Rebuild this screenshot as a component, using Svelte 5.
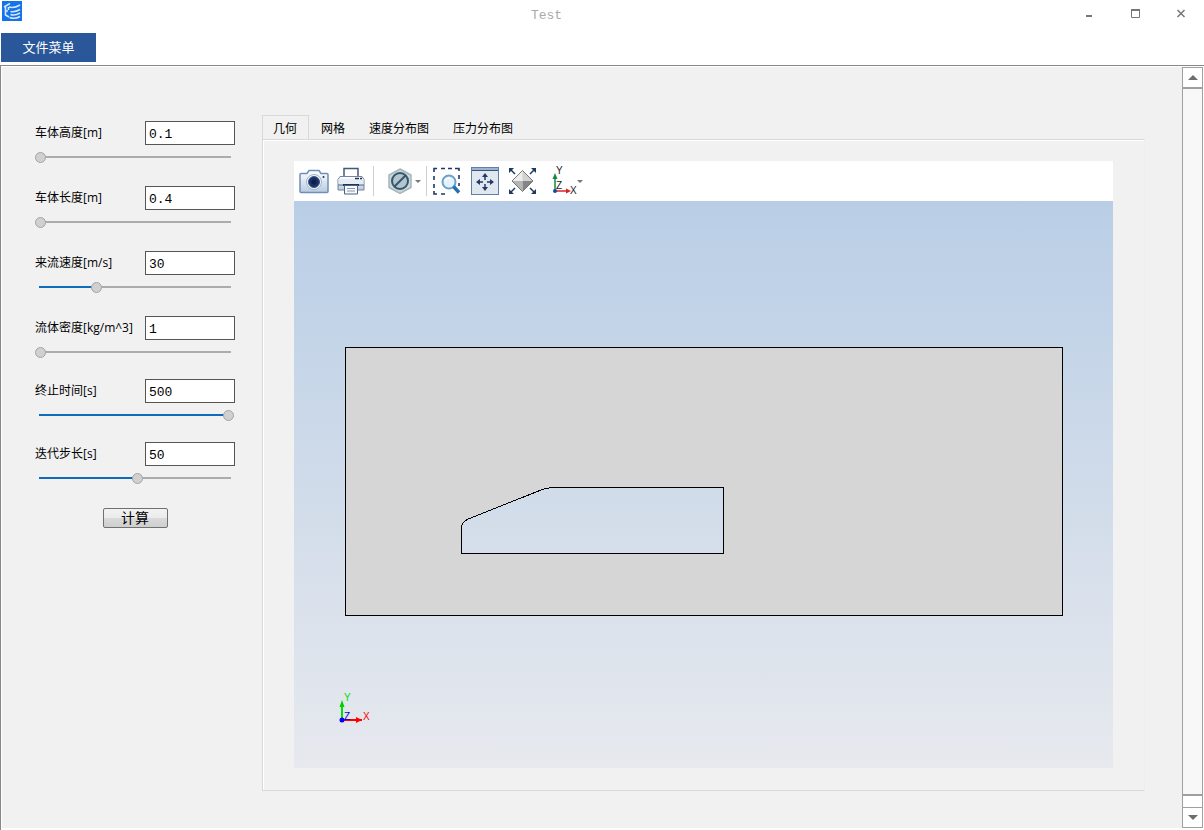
<script lang="ts">
  let params = $state([
    { id: 'height', label: '车体高度[m]', value: 0.1, min: 0.1, max: 1, step: 0.1 },
    { id: 'length', label: '车体长度[m]', value: 0.4, min: 0.4, max: 2, step: 0.1 },
    { id: 'speed', label: '来流速度[m/s]', value: 30, min: 0, max: 100, step: 1 },
    { id: 'density', label: '流体密度[kg/m^3]', value: 1, min: 1, max: 10, step: 1 },
    { id: 'end', label: '终止时间[s]', value: 500, min: 10, max: 500, step: 1 },
    { id: 'iter', label: '迭代步长[s]', value: 50, min: 1, max: 96, step: 1 }
  ]);

  const tabs = ['几何', '网格', '速度分布图', '压力分布图'];
  let active = $state(0);

  function fill(p) {
    const f = (p.value - p.min) / (p.max - p.min);
    return Math.min(1, Math.max(0, f));
  }
</script>

<div class="window">
  <header class="titlebar">
    <svg class="logo" width="20" height="20" viewBox="0 0 20 20" aria-hidden="true">
      <rect width="20" height="20" fill="#1473e8" />
      <path d="M2 6L8 2.500M3.500 6V14L7 16M3.500 10H6M6.500 6V9" fill="none" stroke="#d5e6fc" stroke-width="1.600" />
      <path d="M7 6Q12 7.500 18 4M8.500 10.500Q13 11.500 18 8.500M8.500 13.500Q13 15 18 12M7.500 16.500Q13 18.500 18 15.500" fill="none" stroke="#d5e6fc" stroke-width="1.600" />
    </svg>
    <span class="title">Test</span>
    <div class="win-buttons">
      <button type="button" aria-label="最小化">
        <svg width="12" height="12" viewBox="0 0 12 12"><path d="M3 8h6v2H3z" fill="#777" /></svg>
      </button>
      <button type="button" aria-label="最大化">
        <svg width="12" height="12" viewBox="0 0 12 12"><path d="M2.500 2.500h8v8h-8z" fill="none" stroke="#777" /><path d="M2 2h9v2H2z" fill="#777" /></svg>
      </button>
      <button type="button" aria-label="关闭">
        <svg width="12" height="12" viewBox="0 0 12 12"><path d="M2.500 3l7 7M9.500 3l-7 7" stroke="#777" stroke-width="1.500" /></svg>
      </button>
    </div>
  </header>

  <nav class="menubar">
    <button type="button" class="menu">文件菜单</button>
  </nav>

  <div class="client">
    <main class="content">
      <form class="params" onsubmit={(e) => e.preventDefault()}>
        {#each params as p, i}
          <div class="param" class:tight={i > 2}>
            <div class="row">
              <label for={p.id}>{p.label}</label>
              <input class="field" id={p.id} type="text" bind:value={p.value} />
            </div>
            <input
              class="slider"
              type="range"
              aria-label={p.label}
              min={p.min}
              max={p.max}
              step={p.step}
              bind:value={p.value}
              style="--fill: {fill(p)}"
            />
          </div>
        {/each}
        <button type="submit" class="run">计算</button>
      </form>

      <section class="views">
        <div class="tabs" role="tablist">
          {#each tabs as tab, i}
            <button type="button" role="tab" class="tab" class:active={active === i} aria-selected={active === i} onclick={() => (active = i)}>{tab}</button>
          {/each}
        </div>

        <div class="pane" role="tabpanel">
          <div class="toolbar">
            <button type="button" class="tool" aria-label="截图">
              <svg width="30" height="30" viewBox="0 0 30 30">
                <defs>
                  <linearGradient id="steel" x1="0" y1="0" x2="0" y2="1"><stop offset="0" stop-color="#fff" /><stop offset="1" stop-color="#b9cbe0" /></linearGradient>
                </defs>
                <path d="M2 7.500h6l2-3h10l2 3h6q1 0 1 1v17q0 1-1 1H2q-1 0-1-1v-17q0-1 1-1z" fill="url(#steel)" stroke="#6f8fb8" stroke-width="1.500" />
                <circle cx="15" cy="16" r="7.500" fill="#f1f6fb" stroke="#9fb5d0" />
                <circle cx="15" cy="16" r="5.500" fill="#1b3263" stroke="#3b5a8c" />
                <circle cx="15" cy="16" r="2.500" fill="#0f204a" />
                <circle cx="24.500" cy="11" r="1" fill="#1b3263" />
              </svg>
            </button>
            <button type="button" class="tool" aria-label="打印">
              <svg width="30" height="30" viewBox="0 0 30 30">
                <path d="M7 12V2.500h14V12" fill="#fff" stroke="#44597a" stroke-width="1.500" />
                <path d="M3 10.500h22l2 3v10.500H1V13.500z" fill="url(#steel)" stroke="#7284a0" />
                <path d="M1.500 13h25v6h-25z" fill="#e6ecf4" />
                <path d="M18 12.500h7" stroke="#24334f" stroke-width="1.500" stroke-dasharray="4 1" />
                <path d="M1 19h26" stroke="#51658a" />
                <path d="M6 19h16" stroke="#24334f" stroke-width="2" />
                <path d="M7.500 19.500h13v8.500h-13z" fill="#f7f9fc" stroke="#4b6284" />
                <path d="M10 22.500h8M10 25h8" stroke="#8796ac" />
              </svg>
            </button>
            <span class="sep"></span>
            <button type="button" class="tool drop gap" aria-label="裁剪">
              <svg width="30" height="30" viewBox="0 0 30 30">
                <path d="M15 3l11 6v12.500L15 27.500 4 21.500V9z" fill="#cbd7d8" stroke="#a3b7ba" stroke-width="1.500" />
                <circle cx="15" cy="15" r="8" fill="#b3c6d0" stroke="#35566b" stroke-width="2" />
                <path d="M9.500 20.500l11-11" stroke="#35566b" stroke-width="2" />
              </svg>
              <span class="caret"></span>
            </button>
            <span class="sep"></span>
            <button type="button" class="tool" aria-label="框选缩放">
              <svg width="30" height="30" viewBox="0 0 30 30">
                <path d="M3 6V2.500h3M10 2.500h4M17 2.500h4M24 2.500h4V5M28 9v4M28 17v3M3 10v4M3 18v4M3 25v3h3M10 28h4" fill="none" stroke="#213766" stroke-width="1.600" />
                <circle cx="18" cy="16" r="6.500" fill="#e4f2fb" stroke="#6aa2cc" stroke-width="2" />
                <path d="M14 15q2-4 6-2" fill="none" stroke="#fff" stroke-width="1.500" />
                <path d="M22.500 20.500l5.500 6" stroke="#276fae" stroke-width="3.500" />
              </svg>
            </button>
            <button type="button" class="tool" aria-label="适合窗口">
              <svg width="30" height="30" viewBox="0 0 30 30">
                <rect x="2.500" y="1.500" width="27" height="27" fill="#e0e7ef" stroke="#6080a8" />
                <path d="M3 2h26v2H3z" fill="#9db5d3" />
                <path d="M3 4.500h26" stroke="#3b5278" />
                <path d="M16 9v5M16 18v5M9 16h5M18 16h5" stroke="#223a66" stroke-width="1.500" />
                <path d="M16 7l3 4h-6zM16 25l3-4h-6zM7 16l4-3v6zM25 16l-4-3v6z" fill="#223a66" />
              </svg>
            </button>
            <button type="button" class="tool" aria-label="全部显示">
              <svg width="30" height="30" viewBox="0 0 30 30">
                <path d="M15.500 4.500L26 15H5z" fill="#ededed" />
                <path d="M15.500 4.500L26 15H15.500z" fill="#d2d2d2" />
                <path d="M5 15h10.500v10.500z" fill="#b5b5b5" />
                <path d="M15.500 15H26L15.500 25.500z" fill="#858585" />
                <path d="M15.500 4.500L26 15 15.500 25.500 5 15z" fill="none" stroke="#777" />
                <path d="M8 8L4 4M23 8l4-4M8 22l-4 4M23 22l4 4" stroke="#213766" stroke-width="1.500" />
                <path d="M2 2h5L2 7zM29 2v5l-5-5zM2 28v-5l5 5zM29 28h-5l5-5z" fill="#213766" />
              </svg>
            </button>
            <button type="button" class="tool drop axes" aria-label="视图方向">
              <svg width="30" height="30" viewBox="0 0 30 30">
                <path d="M8 25V11" stroke="#138a42" stroke-width="1.500" />
                <path d="M8 7l2.500 6h-5z" fill="#138a42" />
                <path d="M8 25h12" stroke="#e02020" stroke-width="1.500" />
                <path d="M24 25l-5-2.500v5z" fill="#e02020" />
                <circle cx="8" cy="25" r="2" fill="#1547a5" />
                <text x="9" y="8">Y</text>
                <text x="9" y="23">Z</text>
                <text x="23" y="28">X</text>
              </svg>
              <span class="caret"></span>
            </button>
          </div>

          <svg class="scene" viewBox="0 0 819 567" preserveAspectRatio="xMidYMid meet">
            <path
              d="M51.500 146.500H768.500V414.500H51.500ZM167.500 352.500V326Q168 322 173 318.500L247 289Q252 287 260 286.500H429.500V352.500Z"
              fill="#d6d6d6" fill-rule="evenodd" stroke="#000" shape-rendering="crispEdges"
            />
            <path d="M48 518V502" stroke="#00e000" stroke-width="2" />
            <path d="M48 499l2.500 7h-5z" fill="#00d000" />
            <path d="M48 519h20" stroke="#f00" stroke-width="2" />
            <path d="M68 519l-6-3v6z" fill="#f00" />
            <circle cx="48" cy="519" r="2.500" fill="#00f" />
            <text x="50" y="500" fill="#00e000">Y</text>
            <text x="50" y="519" fill="#0000e0">Z</text>
            <text x="69" y="519" fill="#f00">X</text>
          </svg>
        </div>
      </section>
    </main>

    <div class="scrollbar">
      <button type="button" aria-label="向上滚动"><svg width="10" height="6" viewBox="0 0 10 6"><path d="M5 0l5 5H0z" fill="#6e6e6e" /></svg></button>
      <div class="thumb"></div>
      <div class="rest"></div>
      <button type="button" aria-label="向下滚动"><svg width="10" height="6" viewBox="0 0 10 6"><path d="M5 5l5-5H0z" fill="#6e6e6e" /></svg></button>
    </div>
  </div>
</div>

<style>
:global(body) { margin: 0; background: #fff; }
.window, .window * { box-sizing: border-box; }
.window {
  min-height: 100vh; display: flex; flex-direction: column;
  font: 12px/16px "Open Sans", "Noto Sans CJK SC", sans-serif; color: #000;
}
button { font: inherit; color: inherit; padding: 0; border: 0; background: none; }

.titlebar {
  height: 33px; padding: 1px 0 0 2px;
  display: grid; grid-template-columns: 1fr auto 1fr; align-items: start;
}
.title { font: 13px/30px "Liberation Mono", monospace; color: #aaa; padding-right: 113px; }
.win-buttons { justify-self: end; display: flex; }
.win-buttons button { width: 46px; height: 24px; display: grid; place-items: center; }

.menubar { padding: 0 1px; height: 32px; }
.menu {
  width: 95px; height: 29px; background: #2a579a; color: #fff;
  font-size: 13px; line-height: 29px;
}

.client { flex: 1; display: flex; border: 1px solid #86868b; border-right: 0; padding: 1px; }
.content { flex: 1; min-width: 0; display: flex; background: #f1f1f1; }

.params { width: 200px; margin: 54px 27px 0 33px; flex: none; display: flex; flex-direction: column; }
.param { height: 65px; }
.param.tight { height: 63px; }
.row { display: flex; justify-content: space-between; height: 24px; white-space: nowrap; }
.row label { line-height: 24px; }
.field {
  width: 90px; height: 24px; border: 1px solid #555; border-radius: 0; background: #fff;
  padding: 2px 3px 0; font: 13px/20px "Liberation Mono", monospace; color: #000; outline: none;
}
.slider {
  appearance: none; -webkit-appearance: none; display: block;
  width: 199px; height: 11px; margin: 7px 0 0;
  background:
    linear-gradient(#0f6cbd, #0f6cbd) no-repeat 4px 4px / calc((100% - 11px) * var(--fill) + 2px) 2px,
    linear-gradient(#acacac, #acacac) no-repeat 4px 4px / calc(100% - 7px) 2px;
}
.slider::-webkit-slider-thumb {
  -webkit-appearance: none; box-sizing: border-box; width: 11px; height: 11px;
  border-radius: 50%; border: 1px solid #a5a5a5; background: #d0d0d0;
}
.run {
  align-self: center; width: 65px; height: 20px; margin-top: 3px;
  border: 1px solid #707070; border-radius: 2px; font-size: 14px; line-height: 16px;
  background: linear-gradient(#f2f2f2, #ebebeb 50%, #dadada 50%, #cfcfcf);
}

.views { flex: 1; min-width: 0; margin: 48px 37px 37px 0; display: flex; flex-direction: column; }
.tabs { display: flex; height: 24px; }
.tab { padding: 0 12px; height: 24px; line-height: 25px; border-top: 1px solid transparent; }
.tab.active { border: 1px solid #d9d9d9; border-bottom: 0; padding: 0 11px 0 10px; }
.pane {
  flex: 1; padding: 21px 31px 22px; display: flex; flex-direction: column;
  border: 1px solid #d9d9d9; border-right-color: #eee; box-shadow: inset 1px 1px #fff;
}

.toolbar { height: 40px; background: #fff; padding: 0 5px; display: flex; align-items: center; }
.tool { width: 30px; height: 30px; margin-right: 8px; display: flex; align-items: center; flex: none; }
.tool svg { flex: none; overflow: visible; }
.tool text { font: 10px "Liberation Sans", sans-serif; fill: #222; }
.drop { width: 36px; margin-right: 7px; }
.gap { margin-left: 7px; }
.axes { margin-left: 2px; }
.sep { width: 1px; height: 30px; background: #d0d0d0; margin: 0 4px 0 -2px; }
.gap { margin-left: 7px; }
.caret { border: 3px solid transparent; border-top-color: #777; border-bottom: 0; }

.scene {
  display: block; width: 100%; flex: 1; min-height: 0;
  background: linear-gradient(#b9cee6, #e7e9ee);
}
.scene text { font: 10px "Liberation Sans", sans-serif; }

.scrollbar { width: 21px; flex: none; display: flex; flex-direction: column; background: #a0a0a0; padding: 1px; gap: 1px; }
.scrollbar button { height: 19px; background: #fff; display: grid; place-items: center; flex: none; }
.thumb { flex: 1; background: #f8f8f8; margin-top: 1px; }
.rest { height: 11px; background: #fff; margin-top: 1px; }

.client { padding-bottom: 2px; }
</style>
